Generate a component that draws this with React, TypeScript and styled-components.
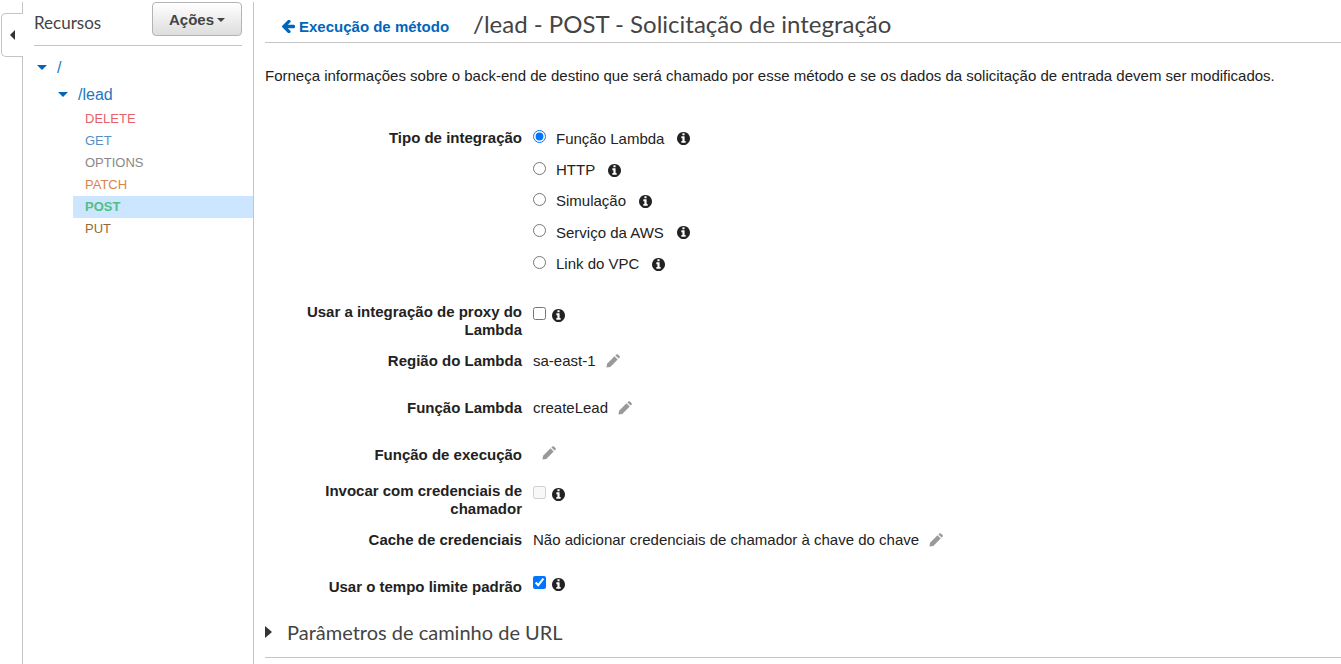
import React, { useState } from "react";
import styled, { createGlobalStyle } from "styled-components";

const GlobalStyle = createGlobalStyle`
  *, *::before, *::after { box-sizing: border-box; }
  body {
    margin: 0;
    background: #fff;
    color: #222;
    font: 15px/18px "Liberation Sans", Arial, sans-serif;
  }
  button { font: inherit; cursor: pointer; }
`;

const heading = `
  margin: 0;
  color: #444;
  font-family: Lato, sans-serif;
  font-weight: 400;
`;

const Page = styled.div`
  display: flex;
  min-height: 100vh;
  padding-top: 2px;
`;

const Gutter = styled.div`
  display: flex;
  flex: 0 0 23px;
  flex-direction: column;
  padding-left: 1px;
`;

const GutterLine = styled.div<{ $grow?: boolean }>`
  flex: ${(p) => (p.$grow ? "1 0 auto" : "0 0 11px")};
  border-right: 1px solid #c4c4c4;
`;

const CollapseTab = styled.button`
  display: flex;
  align-items: center;
  justify-content: center;
  height: 44px;
  padding: 0;
  border: 1px solid #c4c4c4;
  border-right: 0;
  border-radius: 5px 0 0 5px;
  background: #fff;
`;

const Sidebar = styled.aside`
  flex: 0 0 231px;
  border-right: 1px solid #c4c4c4;
`;

const SidebarHeader = styled.header`
  display: flex;
  align-items: flex-start;
  justify-content: space-between;
  height: 44px;
  margin: 0 11px;
  border-bottom: 1px solid #c4c4c4;
`;

const SidebarTitle = styled.h2`
  ${heading}
  font-size: 17px;
  line-height: 42px;
`;

const ActionsButton = styled.button`
  display: flex;
  align-items: center;
  justify-content: center;
  gap: 3px;
  width: 90px;
  height: 34px;
  padding: 2px 0 0;
  border: 1px solid #b4b4b4;
  border-radius: 4px;
  background: linear-gradient(#fff, #ddd);
  color: #444;
  font-weight: 700;
`;

const Tree = styled.ul`
  margin: 0;
  padding: 8px 0 0;
  list-style: none;
`;

const TreeNode = styled.li<{ $level: number }>`
  display: flex;
  align-items: center;
  gap: 10px;
  height: 27px;
  padding-left: ${(p) => 14 + p.$level * 21}px;
`;

const NodeLink = styled.a`
  color: #1f78c1;
  font-size: 16px;
  text-decoration: none;
`;

const MethodItem = styled.li`
  margin-left: 50px;
`;

const MethodLink = styled.a<{ $color: string; $active?: boolean }>`
  display: block;
  padding-left: 12px;
  background: ${(p) => (p.$active ? "#cce6ff" : "transparent")};
  color: ${(p) => p.$color};
  font-size: 13px;
  font-weight: ${(p) => (p.$active ? 700 : 400)};
  line-height: 22px;
  text-decoration: none;
`;

const Main = styled.main`
  flex: 1;
  min-width: 0;
  padding-left: 11px;
`;

const MainHeader = styled.header`
  display: flex;
  align-items: center;
  gap: 24px;
  height: 41px;
  padding: 4px 0 0 17px;
  border-bottom: 1px solid #c4c4c4;
`;

const BackLink = styled.a`
  display: flex;
  align-items: center;
  gap: 4px;
  padding-top: 5px;
  color: #0066bb;
  font-weight: 700;
  text-decoration: none;
`;

const Title = styled.h1`
  ${heading}
  font-size: 24px;
  line-height: 30px;
`;

const Description = styled.p`
  margin: 24px 0 38px;
`;

const Row = styled.div<{ $kind?: "radios" | "tall" }>`
  display: grid;
  grid-template-columns: 257px 1fr;
  column-gap: 11px;
  margin-bottom: ${(p) => (p.$kind === "radios" ? 21 : 0)}px;

  & > :first-child {
    padding: ${(p) =>
      p.$kind === "tall" ? "2px 0 0" : p.$kind === "radios" ? "6px 0 0" : "13px 0 16px"};
  }
`;

const Label = styled.label`
  font-weight: 700;
  text-align: right;
`;

const RadioList = styled.div`
  display: grid;
  grid-auto-rows: 1fr;
  min-height: 157px;
`;

const RadioOption = styled.div`
  display: flex;
  align-items: center;

  input { margin: 0 10px 4px 0; }
  button { margin-left: 13px; }
`;

const CheckField = styled.div<{ $top: number }>`
  display: flex;
  align-items: flex-start;
  gap: 6px;
  padding-top: ${(p) => p.$top}px;

  input { margin: 0; }
  button { margin-top: 2px; }
`;

const ValueField = styled.div<{ $empty: boolean }>`
  display: flex;
  align-items: ${(p) => (p.$empty ? "flex-start" : "center")};
  gap: 10px;
  height: 18px;
  margin-top: 13px;
  padding-left: ${(p) => (p.$empty ? 9 : 0)}px;
`;

const IconButton = styled.button<{ $muted?: boolean }>`
  display: flex;
  padding: 0;
  border: 0;
  background: none;
  color: ${(p) => (p.$muted ? "#999" : "#222")};
`;

const Section = styled.section`
  padding: 8px 0 13px;
  border-bottom: 1px solid #c4c4c4;
`;

const SectionToggle = styled.button`
  display: flex;
  align-items: center;
  gap: 15px;
  padding: 0;
  border: 0;
  background: none;
`;

const SectionTitle = styled.span`
  ${heading}
  font-size: 20px;
  line-height: 24px;
`;

const CaretDown = ({ width, height, color }: { width: number; height: number; color: string }) => (
  <svg width={width} height={height} viewBox="0 0 10 5" preserveAspectRatio="none" aria-hidden>
    <path d="M0 0h10L5 5z" fill={color} />
  </svg>
);

const ArrowLeft = () => (
  <svg width="13" height="13" viewBox="192 224 1472 1472" fill="currentColor" aria-hidden>
    <path d="M1664 896v128q0 53-32.5 90.5t-84.5 37.5h-704l293 294q38 36 38 90t-38 90l-75 76q-37 37-90 37-52 0-91-37l-651-652q-37-37-37-90 0-52 37-91l651-650q38-38 91-38 52 0 90 38l75 74q38 38 38 91t-38 91l-293 293h704q52 0 84.5 37.5t32.5 90.5z" />
  </svg>
);

const Pencil = () => (
  <svg width="14" height="14" viewBox="0 0 14 14" fill="currentColor" aria-hidden>
    <path d="M8.5 2.3l3.2 3.2-7.4 7.4-3.9.7.7-3.9z" />
    <path d="M9.4 1.4l.9-.9q.8-.7 1.6 0l1.6 1.6q.7.8 0 1.6l-.9.9z" />
  </svg>
);

const Info = ({ about }: { about: string }) => (
  <IconButton type="button" aria-label={`Informações: ${about}`}>
    <svg width="13" height="13" viewBox="128 128 1536 1536" fill="currentColor" aria-hidden>
      <path d="M1152 1376v-160q0-14-9-23t-23-9h-96v-512q0-14-9-23t-23-9h-320q-14 0-23 9t-9 23v160q0 14 9 23t23 9h96v320h-96q-14 0-23 9t-9 23v160q0 14 9 23t23 9h448q14 0 23-9t9-23zm-128-896v-160q0-14-9-23t-23-9h-192q-14 0-23 9t-9 23v160q0 14 9 23t23 9h192q14 0 23-9t9-23zm640 416q0 209-103 385.5t-279.5 279.5-385.5 103-385.5-103-279.5-279.5-103-385.5 103-385.5 279.5-279.5 385.5-103 385.5 103 279.5 279.5 103 385.5z" />
    </svg>
  </IconButton>
);

const methods = [
  { name: "DELETE", color: "#e8606a" },
  { name: "GET", color: "#5590c4" },
  { name: "OPTIONS", color: "#888" },
  { name: "PATCH", color: "#d9844f" },
  { name: "POST", color: "#52bf86", active: true },
  { name: "PUT", color: "#986a33" },
];

const types = ["Função Lambda", "HTTP", "Simulação", "Serviço da AWS", "Link do VPC"];

function ValueRow({ label, value = "" }: { label: string; value?: string }) {
  return (
    <Row>
      <Label as="div">{label}</Label>
      <ValueField $empty={!value}>
        {value && <span>{value}</span>}
        <IconButton $muted type="button" aria-label={`Editar ${label}`}>
          <Pencil />
        </IconButton>
      </ValueField>
    </Row>
  );
}

interface CheckRowProps {
  id: string;
  label: string;
  tall?: boolean;
  checked?: boolean;
  disabled?: boolean;
}

function CheckRow({ id, label, tall, checked, disabled }: CheckRowProps) {
  return (
    <Row $kind={tall ? "tall" : undefined}>
      <Label htmlFor={id}>{label}</Label>
      <CheckField $top={tall ? 6 : 11}>
        <input id={id} type="checkbox" defaultChecked={checked} disabled={disabled} />
        <Info about={label} />
      </CheckField>
    </Row>
  );
}

export default function App() {
  const [type, setType] = useState(types[0]);
  return (
    <>
      <GlobalStyle />
      <Page>
        <Gutter>
          <GutterLine />
          <CollapseTab type="button" aria-label="Recolher painel">
            <svg width="5" height="10" viewBox="0 0 5 10" aria-hidden>
              <path d="M5 0v10L0 5z" fill="#333" />
            </svg>
          </CollapseTab>
          <GutterLine $grow />
        </Gutter>
        <Sidebar>
          <SidebarHeader>
            <SidebarTitle>Recursos</SidebarTitle>
            <ActionsButton type="button">
              Ações
              <CaretDown width={8} height={4} color="#444" />
            </ActionsButton>
          </SidebarHeader>
          <Tree>
            <TreeNode $level={0}>
              <CaretDown width={10} height={5} color="#0066bb" />
              <NodeLink href="#root-resource">/</NodeLink>
            </TreeNode>
            <TreeNode $level={1}>
              <CaretDown width={10} height={5} color="#0066bb" />
              <NodeLink href="#lead">/lead</NodeLink>
            </TreeNode>
            {methods.map((m) => (
              <MethodItem key={m.name}>
                <MethodLink href={`#${m.name}`} $color={m.color} $active={m.active}>
                  {m.name}
                </MethodLink>
              </MethodItem>
            ))}
          </Tree>
        </Sidebar>
        <Main>
          <MainHeader>
            <BackLink href="#metodo">
              <ArrowLeft />
              Execução de método
            </BackLink>
            <Title>/lead - POST - Solicitação de integração</Title>
          </MainHeader>
          <Description>
            Forneça informações sobre o back-end de destino que será chamado por esse método e se os
            dados da solicitação de entrada devem ser modificados.
          </Description>
          <form>
            <Row $kind="radios">
              <Label as="div" id="tipo">Tipo de integração</Label>
              <RadioList role="radiogroup" aria-labelledby="tipo">
                {types.map((t, i) => (
                  <RadioOption key={t}>
                    <input
                      id={`tipo-${i}`}
                      type="radio"
                      name="tipo"
                      checked={type === t}
                      onChange={() => setType(t)}
                    />
                    <label htmlFor={`tipo-${i}`}>{t}</label>
                    <Info about={t} />
                  </RadioOption>
                ))}
              </RadioList>
            </Row>
            <CheckRow id="proxy" label="Usar a integração de proxy do Lambda" tall />
            <ValueRow label="Região do Lambda" value="sa-east-1" />
            <ValueRow label="Função Lambda" value="createLead" />
            <ValueRow label="Função de execução" />
            <CheckRow id="invocar" label="Invocar com credenciais de chamador" tall disabled />
            <ValueRow
              label="Cache de credenciais"
              value="Não adicionar credenciais de chamador à chave do chave"
            />
            <CheckRow id="tempo" label="Usar o tempo limite padrão" checked />
          </form>
          <Section>
            <SectionToggle type="button" aria-expanded={false}>
              <svg width="7" height="12" viewBox="0 0 7 12" aria-hidden>
                <path d="M0 0v12L7 6z" fill="#333" />
              </svg>
              <SectionTitle>Parâmetros de caminho de URL</SectionTitle>
            </SectionToggle>
          </Section>
        </Main>
      </Page>
    </>
  );
}
